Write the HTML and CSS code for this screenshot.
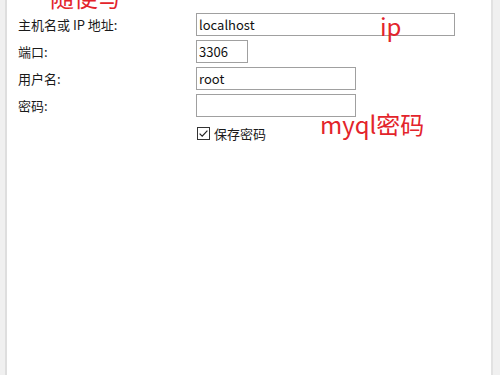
FILE: index.html
```html
<!DOCTYPE html>
<html>
<head>
  <meta charset="utf-8">
  <title>连接属性</title>
  <link rel="stylesheet" href="styles.css">
</head>
<body>
  <div class="panel">
    <div class="form">
      <label class="field-label">主机名或 IP 地址:</label>
      <input class="field host" type="text" value="localhost">

      <label class="field-label">端口:</label>
      <input class="field port" type="text" value="3306">

      <label class="field-label">用户名:</label>
      <input class="field user" type="text" value="root">

      <label class="field-label">密码:</label>
      <input class="field user" type="password" value="">

      <div class="save-row">
        <span class="checkbox">
          <svg width="13" height="13" viewBox="0 0 13 13">
            <rect x="0.5" y="0.5" width="12" height="12" fill="#fff" stroke="#333"/>
            <path d="M2.6 6.6 L5.2 9.2 L10.4 3.6" fill="none" stroke="#222" stroke-width="1.2"/>
          </svg>
        </span>
        <span class="save-text">保存密码</span>
      </div>
    </div>

    <!-- hand-written annotations over the dialog -->
    <div class="note note-top">随便写</div>
    <div class="note note-ip">ip</div>
    <div class="note note-pwd">myql密码</div>
  </div>
</body>
</html>
```

FILE: styles.css
```css
:root {
  --bg-color: #f0f0f0;
  --panel-bg: #ffffff;
  --text-color: #1a1a1a;
  --field-border: #a0a0a0;
  --note-color: #e3242b;
}

* {
  margin: 0;
  padding: 0;
  box-sizing: border-box;
}

body {
  width: 500px;
  height: 375px;
  overflow: hidden;
  background-color: var(--bg-color);
  font-family: "Noto Sans CJK SC", "Noto Sans", sans-serif;
  color: var(--text-color);
  display: flex;
}

.panel {
  position: relative;
  width: 488px;
  height: 375px;
  margin-left: 5px;
  background-color: var(--panel-bg);
  border-left: 2px solid #dedede;
  border-right: 2px solid #e2e2e2;
}

.form {
  display: grid;
  grid-template-columns: 178px auto;
  row-gap: 4px;
  padding: 13px 0 0 11px;
  justify-items: start;
  align-items: center;
}

.field-label {
  font-size: 13px;
  line-height: 23px;
}

.field {
  height: 23px;
  border: 1px solid var(--field-border);
  padding: 0 2px;
  font-family: "Noto Sans CJK SC", "Noto Sans", sans-serif;
  font-size: 13px;
  color: #111;
  background: #fff;
  outline: none;
}

.host {
  width: 259px;
}

.port {
  width: 52px;
}

.user {
  width: 160px;
}

.save-row {
  grid-column: 2;
  display: flex;
  align-items: center;
  gap: 4px;
  margin-top: 5px;
  padding-left: 1px;
}

.checkbox {
  display: flex;
}

.save-text {
  font-size: 13px;
  line-height: 15px;
}

.note {
  position: absolute;
  color: var(--note-color);
  font-size: 24px;
  line-height: 24px;
  white-space: nowrap;
}

.note-top {
  left: 43px;
  top: -15px;
}

.note-ip {
  left: 373px;
  top: 14px;
}

.note-pwd {
  left: 313px;
  top: 112px;
}
```
